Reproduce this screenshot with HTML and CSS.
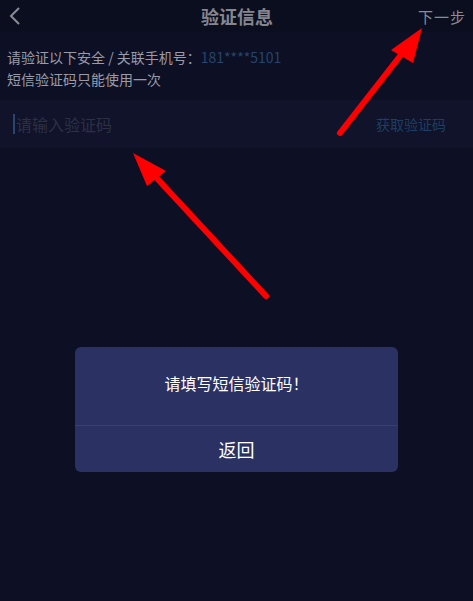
FILE: index.html
```html
<!DOCTYPE html>
<html lang="zh-CN">
<head>
  <meta charset="UTF-8">
  <meta name="viewport" content="width=device-width, initial-scale=1.0">
  <title>验证信息</title>
  <link rel="stylesheet" href="styles.css">
</head>
<body>
<div class="page">
  <div class="top-bar">
    <span class="back">
      <svg width="14" height="20" viewBox="0 0 14 20"><polyline points="11,2 3,10 11,18" fill="none" stroke="#8a8b95" stroke-width="2"/></svg>
    </span>
    <span class="title">验证信息</span>
    <span class="next">下一步</span>
  </div>

  <div class="info">
    <p>请验证以下安全 / 关联手机号：<span class="phone">181****5101</span></p>
    <p>短信验证码只能使用一次</p>
  </div>

  <div class="code-row">
    <span class="cursor"></span>
    <span class="placeholder">请输入验证码</span>
    <span class="get-code">获取验证码</span>
  </div>
</div>

<!-- 弹窗 -->
<div class="mask">
  <div class="dialog">
    <div class="dialog-msg">请填写短信验证码！</div>
    <div class="dialog-btn">返回</div>
  </div>
</div>

<!-- 红色标注箭头 -->
<svg class="marks" width="473" height="601" viewBox="0 0 473 601">
  <line x1="340" y1="133" x2="404" y2="51" stroke="#f00" stroke-width="6" stroke-linecap="round"/>
  <polygon points="422,28 391,50 413,63" fill="#f00"/>
  <line x1="266" y1="296" x2="152" y2="173" stroke="#f00" stroke-width="6" stroke-linecap="round"/>
  <polygon points="133,153 166,171 147,186" fill="#f00"/>
</svg>
</body>
</html>
```

FILE: styles.css
```css
html, body {
  margin: 0;
  padding: 0;
  height: 100%;
}

body {
  background: #0d1024;
  font-family: "Noto Sans CJK SC", "Noto Sans", sans-serif;
  overflow: hidden;
}

.top-bar {
  height: 32px;
  display: flex;
  align-items: center;
  justify-content: space-between;
  padding: 0 7px 0 8px;
  background: #0b0e1e;
}

.back {
  width: 50px;
  display: flex;
  align-items: center;
}

.title {
  font-size: 18px;
  color: #85868f;
  font-weight: bold;
}

.next {
  width: 50px;
  text-align: right;
  font-size: 15px;
  color: #8a8b94;
  letter-spacing: 1px;
}

/* 提示信息 */
.info {
  padding: 14px 7px 10px;
}

.info p {
  margin: 0;
  font-size: 14px;
  line-height: 22px;
  color: #9a9ba8;
}

.phone {
  color: #26456b;
}

/* 验证码输入行 */
.code-row {
  height: 48px;
  display: flex;
  align-items: center;
  padding: 0 27px 0 13px;
  background: #10132a;
}

.cursor {
  width: 2px;
  height: 20px;
  background: #2a4670;
  margin-right: 1px;
}

.placeholder {
  flex: 1;
  font-size: 16px;
  color: #2d3045;
}

.get-code {
  font-size: 14px;
  color: #1e3e62;
}

/* 弹窗 */
.mask {
  position: fixed;
  left: 0;
  top: 0;
  right: 0;
  bottom: 0;
  display: flex;
  justify-content: center;
  align-items: flex-start;
  padding-top: 347px;
}

.dialog {
  width: 323px;
  background: #2b3163;
  border-radius: 6px;
  color: #fff;
  text-align: center;
}

.dialog-msg {
  height: 78px;
  line-height: 72px;
  font-size: 16px;
  border-bottom: 1px solid #3a4172;
}

.dialog-btn {
  height: 46px;
  line-height: 46px;
  font-size: 18px;
}

.marks {
  position: fixed;
  left: 0;
  top: 0;
  pointer-events: none;
}
```
